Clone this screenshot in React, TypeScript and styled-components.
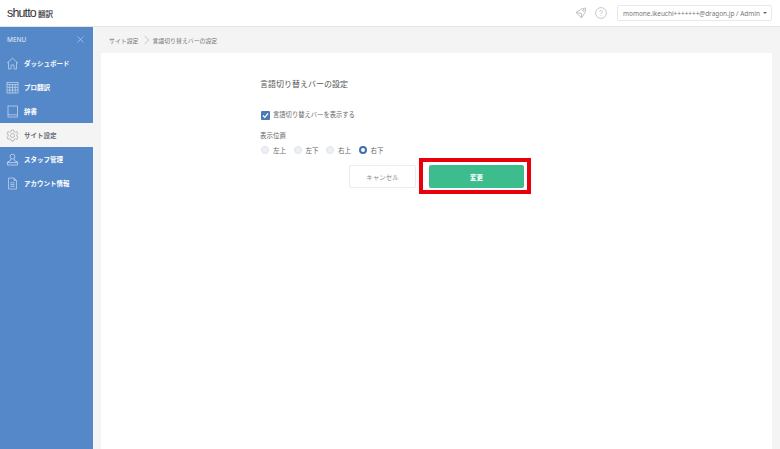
import React from 'react'
import styled, { createGlobalStyle } from 'styled-components'
import { X } from 'lucide-react'

const GlobalStyle = createGlobalStyle`
  html, body { margin: 0; padding: 0; height: 100%; background: #f4f4f4; overflow: hidden; }
  body { font-family: "Noto Sans CJK JP", "Noto Sans", sans-serif; color: #555; }
  * { box-sizing: border-box; }
`

const Page = styled.div`
  width: 780px;
  height: 449px;
  display: flex;
  flex-direction: column;
`

const Header = styled.header`
  height: 27px;
  flex: none;
  background: #fff;
  border-bottom: 1px solid #e4e4e4;
  display: flex;
  align-items: center;
  padding: 0 8px 0 7px;
`

const Logo = styled.div`
  font-family: "Liberation Sans", sans-serif;
  font-size: 12.5px;
  letter-spacing: -0.85px;
  color: #333;
  display: flex;
  align-items: center;
  gap: 2px;
  span { font-family: "Noto Sans CJK JP", sans-serif; font-size: 7.5px; letter-spacing: 0; color: #555; font-weight: 700; }
`

const HeaderRight = styled.div`
  margin-left: auto;
  display: flex;
  align-items: center;
`

const HeaderIcon = styled.span`
  display: flex;
  color: #bbb;
  margin-right: 8px;
`

const AccountMenu = styled.div`
  width: 155px;
  height: 16px;
  margin-left: 2px;
  border: 1px solid #e6e9f0;
  border-radius: 2px;
  font-family: "Noto Sans", sans-serif;
  font-size: 6.45px;
  color: #777;
  display: flex;
  align-items: center;
  padding: 0 4px 0 5px;
  justify-content: space-between;
  white-space: nowrap;
`

const Caret = styled.i`
  width: 0;
  height: 0;
  border: 2px solid transparent;
  border-top: 2.5px solid #667;
  border-bottom: 0;
`

const Body = styled.div`
  flex: 1;
  display: flex;
  min-height: 0;
`

const Sidebar = styled.nav`
  width: 93px;
  flex: none;
  background: #5588c9;
  color: #fff;
`

const MenuHead = styled.div`
  height: 24px;
  display: flex;
  align-items: center;
  justify-content: space-between;
  padding: 0 7px;
  font-family: "Noto Sans", sans-serif;
  font-size: 6.5px;
  color: #e6eef8;
`

const MenuItem = styled.div<{ $active?: boolean }>`
  height: 24px;
  display: flex;
  align-items: center;
  gap: 5px;
  padding-left: 6px;
  font-size: 6.5px;
  font-weight: 700;
  background: ${({ $active }) => ($active ? '#f4f4f4' : 'transparent')};
  color: ${({ $active }) => ($active ? '#6a6f78' : '#fff')};
  svg {
    flex: none;
    color: ${({ $active }) => ($active ? '#aaa' : '#bcd1ea')};
  }
`

const Main = styled.main`
  flex: 1;
  display: flex;
  flex-direction: column;
  min-width: 0;
  padding: 0 8px;
`

const Breadcrumb = styled.div`
  height: 26px;
  flex: none;
  display: flex;
  align-items: center;
  padding-left: 8px;
  font-size: 5.9px;
  color: #777;
  gap: 4px;
`

const CrumbArrow = styled.i`
  width: 6px;
  height: 6px;
  border-top: 1px solid #d5d5d5;
  border-right: 1px solid #d5d5d5;
  transform: rotate(45deg);
`

const Card = styled.section`
  flex: 1;
  background: #fff;
  padding: 24px 0 0 159px;
`

const Title = styled.h1`
  margin: 0;
  font-size: 8px;
  line-height: 13px;
  font-weight: 400;
  color: #555;
`

const CheckRow = styled.label`
  display: flex;
  align-items: center;
  gap: 3px;
  margin-top: 20px;
  font-size: 6.3px;
  line-height: 10px;
  color: #666;
`

const CheckBox = styled.span`
  width: 9px;
  height: 9px;
  margin-left: 1px;
  border-radius: 1px;
  background: #4a7ab8;
  display: flex;
  align-items: center;
  justify-content: center;
`

const FieldLabel = styled.div`
  margin-top: 10px;
  font-size: 6.5px;
  line-height: 10px;
  color: #666;
`

const RadioRow = styled.div`
  display: flex;
  align-items: center;
  margin-top: 5px;
  height: 10px;
  padding-left: 1px;
`

const RadioItem = styled.span`
  display: flex;
  align-items: center;
  gap: 4px;
  width: 32.5px;
  font-size: 6.5px;
  color: #666;
`

const RadioMark = styled.span<{ $checked?: boolean }>`
  width: 8px;
  height: 8px;
  border-radius: 50%;
  background: ${({ $checked }) => ($checked ? '#fff' : '#edf0f6')};
  border: ${({ $checked }) => ($checked ? '2.5px solid #3f6fae' : '1px solid #dfe4ee')};
`

const Actions = styled.div`
  display: flex;
  margin: 10px 0 0 89px;
  gap: 13px;
`

const CancelButton = styled.button`
  width: 67px;
  height: 23px;
  padding: 0;
  border: 1px solid #ececec;
  border-radius: 2px;
  background: #fff;
  color: #888;
  font: 400 6.5px "Noto Sans CJK JP", sans-serif;
`

const SubmitWrap = styled.div`
  position: relative;
`

const SubmitButton = styled.button`
  display: block;
  width: 95px;
  height: 23px;
  padding: 0;
  border: 0;
  border-radius: 2px;
  background: #3dbd8d;
  color: #fff;
  font: 700 6.5px "Noto Sans CJK JP", sans-serif;
`

const Highlight = styled.div`
  position: absolute;
  inset: -7px -7px -6px -10px;
  border: 4px solid #e8000f;
  pointer-events: none;
`

const HomeIcon = () => (
  <svg width="13" height="13" viewBox="0 0 13 13" fill="none" stroke="currentColor" strokeWidth="0.8">
    <path d="M1 6.2 L6.5 1.2 L12 6.2" />
    <path d="M2.5 5.2 V12 H5 V8 H8 V12 H10.5 V5.2" />
  </svg>
)

const GridIcon = () => (
  <svg width="13" height="13" viewBox="0 0 13 13" fill="none" stroke="currentColor" strokeWidth="0.8">
    <rect x="1" y="1.5" width="11" height="10.5" />
    <path d="M1 3.5 H12 M1 6.3 H12 M1 9.1 H12 M3.8 3.5 V12 M6.5 3.5 V12 M9.2 3.5 V12" />
  </svg>
)

const BookIcon = () => (
  <svg width="13" height="13" viewBox="0 0 13 13" fill="none" stroke="currentColor" strokeWidth="0.8">
    <rect x="2" y="1" width="9.5" height="11" />
    <path d="M2 9.8 H11.5" />
  </svg>
)

const GearIcon = () => (
  <svg width="13" height="13" viewBox="0 0 13 13" fill="none" stroke="currentColor" strokeWidth="0.8">
    <path d="M5.4 1 H7.6 L8 2.6 L9.5 3.3 L11 2.6 L12 4.6 L10.8 5.6 V7.4 L12 8.4 L11 10.4 L9.5 9.7 L8 10.4 L7.6 12 H5.4 L5 10.4 L3.5 9.7 L2 10.4 L1 8.4 L2.2 7.4 V5.6 L1 4.6 L2 2.6 L3.5 3.3 L5 2.6 Z" />
    <circle cx="6.5" cy="6.5" r="2" />
  </svg>
)

const StaffIcon = () => (
  <svg width="13" height="13" viewBox="0 0 13 13" fill="none" stroke="currentColor" strokeWidth="0.9">
    <circle cx="6.5" cy="3.6" r="2.4" />
    <path d="M4.8 6 L4.4 7.6 L1.4 9 V12 H11.6 V9 L8.6 7.6 L8.2 6" />
    <path d="M1.4 9.6 H11.6" />
  </svg>
)

const DocIcon = () => (
  <svg width="13" height="13" viewBox="0 0 13 13" fill="none" stroke="currentColor" strokeWidth="0.8">
    <path d="M2.5 1 H8 L10.5 3.5 V12 H2.5 Z" />
    <path d="M8 1 V3.5 H10.5 M4.3 5.8 H8.7 M4.3 7.6 H8.7 M4.3 9.4 H8.7" />
  </svg>
)

const menu = [
  { label: 'ダッシュボード', icon: HomeIcon },
  { label: 'プロ翻訳', icon: GridIcon },
  { label: '辞書', icon: BookIcon },
  { label: 'サイト設定', icon: GearIcon, active: true },
  { label: 'スタッフ管理', icon: StaffIcon },
  { label: 'アカウント情報', icon: DocIcon },
]

const positions = [
  { label: '左上' },
  { label: '左下' },
  { label: '右上' },
  { label: '右下', checked: true },
]

export default function App() {
  return (
    <Page>
      <GlobalStyle />
      <Header>
        <Logo>
          shutto <span>翻訳</span>
        </Logo>
        <HeaderRight>
          <HeaderIcon>
            <svg width="12" height="12" viewBox="0 0 12 12" fill="none" stroke="currentColor" strokeWidth="0.9">
              <path d="M1 5.5 L6.5 2 L10.8 1 L10 5.5 L6.5 10.8 Z" />
              <path d="M1 5.5 L6.5 6.5 L6.5 10.8" />
              <circle cx="8.5" cy="3.5" r="0.7" />
            </svg>
          </HeaderIcon>
          <HeaderIcon>
            <svg width="12" height="12" viewBox="0 0 12 12" fill="none" stroke="currentColor" strokeWidth="0.8">
              <circle cx="6" cy="6" r="5.4" />
              <path d="M4.7 4.8 C4.7 3 7.3 3 7.3 4.7 C7.3 5.8 6 5.7 6 7 M6 8.2 V9" />
            </svg>
          </HeaderIcon>
          <AccountMenu>
            momone.ikeuchi+++++++@dragon.jp / Admin <Caret />
          </AccountMenu>
        </HeaderRight>
      </Header>
      <Body>
        <Sidebar>
          <MenuHead>
            MENU
            <X size={11} strokeWidth={1} />
          </MenuHead>
          {menu.map(({ label, icon: Icon, active }) => (
            <MenuItem key={label} $active={active}>
              <Icon />
              {label}
            </MenuItem>
          ))}
        </Sidebar>
        <Main>
          <Breadcrumb>
            サイト設定
            <CrumbArrow />
            言語切り替えバーの設定
          </Breadcrumb>
          <Card>
            <Title>言語切り替えバーの設定</Title>
            <CheckRow>
              <CheckBox>
                <svg width="7" height="7" viewBox="0 0 6 6" fill="none" stroke="#fff" strokeWidth="1.1">
                  <path d="M0.8 3 L2.4 4.6 L5.2 1.2" />
                </svg>
              </CheckBox>
              言語切り替えバーを表示する
            </CheckRow>
            <FieldLabel>表示位置</FieldLabel>
            <RadioRow>
              {positions.map(p => (
                <RadioItem key={p.label}>
                  <RadioMark $checked={p.checked} />
                  {p.label}
                </RadioItem>
              ))}
            </RadioRow>
            <Actions>
              <CancelButton>キャンセル</CancelButton>
              <SubmitWrap>
                <SubmitButton>変更</SubmitButton>
                <Highlight />
              </SubmitWrap>
            </Actions>
          </Card>
        </Main>
      </Body>
    </Page>
  )
}
